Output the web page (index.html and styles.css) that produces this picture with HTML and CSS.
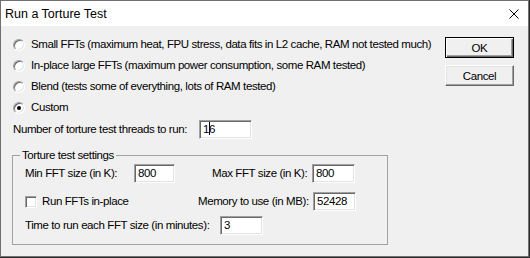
FILE: index.html
```html
<!DOCTYPE html>
<html lang="en">
<head>
  <meta charset="UTF-8">
  <title>Run a Torture Test</title>
  <link rel="stylesheet" href="styles.css">
</head>
<body>
  <div class="window">
    <!-- Title bar -->
    <div class="titlebar">
      <span class="title">Run a Torture Test</span>
      <svg class="close" width="10" height="10" viewBox="0 0 10 10">
        <path d="M0.5 0.5 L9.5 9.5 M9.5 0.5 L0.5 9.5" stroke="#000" stroke-width="1" fill="none"/>
      </svg>
    </div>

    <div class="client">
      <div class="main">
        <div class="option"><span class="radio"></span><span>Small FFTs (maximum heat, FPU stress, data fits in L2 cache, RAM not tested much)</span></div>
        <div class="option"><span class="radio"></span><span>In-place large FFTs (maximum power consumption, some RAM tested)</span></div>
        <div class="option"><span class="radio"></span><span>Blend (tests some of everything, lots of RAM tested)</span></div>
        <div class="option"><span class="radio checked"></span><span>Custom</span></div>

        <div class="threads">
          <span class="label threads-label">Number of torture test threads to run:</span>
          <span class="field threads-field">1<span class="caret"></span>6</span>
        </div>

        <fieldset class="group">
          <legend>Torture test settings</legend>
          <div class="row first">
            <span class="label min-label">Min FFT size (in K):</span>
            <span class="field small">800</span>
            <span class="label max-label">Max FFT size (in K):</span>
            <span class="field">800</span>
          </div>
          <div class="row second">
            <span class="check"></span>
            <span class="label inplace-label">Run FFTs in-place</span>
            <span class="label mem-label">Memory to use (in MB):</span>
            <span class="field">52428</span>
          </div>
          <div class="row third">
            <span class="label time-label">Time to run each FFT size (in minutes):</span>
            <span class="field">3</span>
          </div>
        </fieldset>
      </div>

      <div class="buttons">
        <button class="btn default">OK</button>
        <button class="btn">Cancel</button>
      </div>
    </div>
  </div>
</body>
</html>
```

FILE: styles.css
```css
/* General */
body {
  margin: 0;
  padding: 0;
  background-color: #2b2b2b;
  font-family: "Liberation Sans", Arial, sans-serif;
  font-size: 11.5px;
  letter-spacing: -0.4px;
  color: #000;
}

.window {
  width: 529px;
  height: 257px;
  box-sizing: border-box;
  border: 1px solid #707070;
  background-color: #f0f0f0;
  overflow: hidden;
}

/* Title bar */
.titlebar {
  height: 25px;
  background-color: #fff;
  display: flex;
  align-items: center;
  justify-content: space-between;
  padding: 0 9px 0 4px;
}

.title {
  font-size: 12.5px;
  letter-spacing: 0;
  padding-top: 1px;
}

.close {
  display: block;
  margin-top: 1px;
}

/* Client area */
.client {
  display: flex;
  height: 230px;
}

.main {
  flex: 1;
  min-width: 0;
  padding: 8px 0 0 11px;
}

.option {
  height: 21px;
  display: flex;
  align-items: center;
  gap: 6px;
  margin-left: 1px;
  white-space: nowrap;
  line-height: 15px;
}

.radio {
  width: 12px;
  height: 12px;
  box-sizing: border-box;
  border-radius: 50%;
  border: 1px solid;
  border-color: #a0a0a0 #fff #fff #a0a0a0;
  box-shadow: inset 1px 1px 0 #696969, inset -1px -1px 0 #e3e3e3;
  background-color: #fff;
  position: relative;
  flex-shrink: 0;
}

.radio.checked::after {
  content: "";
  position: absolute;
  left: 3px;
  top: 3px;
  width: 4px;
  height: 4px;
  border-radius: 50%;
  background-color: #000;
}

.label {
  display: inline-block;
  white-space: nowrap;
  line-height: 15px;
  flex-shrink: 0;
}

.field {
  display: inline-block;
  box-sizing: border-box;
  width: 43px;
  height: 19px;
  line-height: 15px;
  padding: 1px 0 0 3px;
  background-color: #fff;
  border: 1px solid;
  border-color: #a0a0a0 #fff #fff #a0a0a0;
  box-shadow: inset 1px 1px 0 #696969, inset -1px -1px 0 #e3e3e3;
  white-space: nowrap;
  flex-shrink: 0;
}

.field.small {
  width: 41px;
}

.caret {
  display: inline-block;
  width: 0;
  height: 13px;
  border-left: 1px solid #000;
  margin-right: -1px;
  vertical-align: -2px;
}

/* Threads row */
.threads {
  display: flex;
  align-items: center;
  margin: 2px 0 0 1px;
  height: 19px;
}

.threads-label {
  width: 186px;
}

.threads-field {
  width: 53px;
}

/* Group box */
.group {
  margin: 9px 0 0 0;
  padding: 1px 0 9px 0;
  width: 376px;
  min-width: 0;
  box-sizing: border-box;
  border: 1px solid #a0a0a0;
}

.group legend {
  margin-left: 7px;
  padding: 0 2px;
  line-height: 15px;
}

.row {
  display: flex;
  align-items: center;
  height: 19px;
  padding-left: 12px;
}

.row.second {
  margin-top: 9px;
}

.row.third {
  margin-top: 5px;
}

.min-label {
  width: 109px;
}

.max-label {
  width: 100px;
  margin-left: 37px;
}

.check {
  width: 12px;
  height: 12px;
  box-sizing: border-box;
  border: 1px solid;
  border-color: #a0a0a0 #fff #fff #a0a0a0;
  box-shadow: inset 1px 1px 0 #696969, inset -1px -1px 0 #e3e3e3;
  background-color: #fff;
  margin-right: 5px;
  flex-shrink: 0;
}

.inplace-label {
  width: 156px;
}

.mem-label {
  width: 115px;
}

.time-label {
  width: 195px;
}

/* Buttons */
.buttons {
  width: 69px;
  margin-right: 14px;
  padding-top: 11px;
  display: flex;
  flex-direction: column;
}

.btn {
  font-family: inherit;
  font-size: 11.5px;
  letter-spacing: -0.4px;
  color: #000;
  height: 21px;
  padding: 0;
  background-color: #f0f0f0;
  border: 1px solid;
  border-color: #fff #696969 #696969 #fff;
  box-shadow: inset -1px -1px 0 #a0a0a0, inset 1px 1px 0 #e3e3e3;
  margin-bottom: 7px;
}

.btn.default {
  border: 1px solid #000;
  box-shadow: inset 1px 1px 0 #fff, inset -1px -1px 0 #696969, inset -2px -2px 0 #a0a0a0;
}
```
